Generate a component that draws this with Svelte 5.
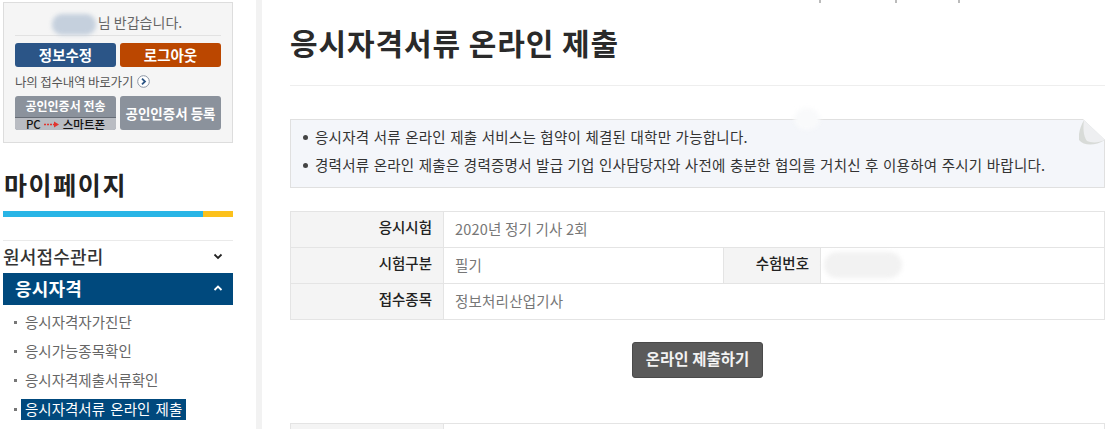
<script>
    const sections = ["응시자격자가진단", "응시가능종목확인", "응시자격제출서류확인", "응시자격서류 온라인 제출"]
    const notices = [
        "응시자격 서류 온라인 제출 서비스는 협약이 체결된 대학만 가능합니다.",
        "경력서류 온라인 제출은 경력증명서 발급 기업 인사담당자와 사전에 충분한 협의를 거치신 후 이용하여 주시기 바랍니다."
    ]
</script>

<div class="page">
    <aside>
        <div class="login">
            <p class="hello"><span class="blur-name"></span>님 반갑습니다.</p>
            <div class="btn-row">
                <button class="btn blue">정보수정</button>
                <button class="btn orange">로그아웃</button>
            </div>
            <p class="shortcut">
                나의 접수내역 바로가기
                <svg width="13" height="13" viewBox="0 0 13 13">
                    <circle cx="6.5" cy="6.5" r="5.8" fill="#fff" stroke="#8a94a3" />
                    <path d="M5 3.6 8 6.5 5 9.4" fill="none" stroke="#2c5585" stroke-width="1.8" />
                </svg>
            </p>
            <div class="btn-row">
                <button class="cert">
                    <span class="cert-top">공인인증서 전송</span>
                    <span class="cert-sub">
                        PC
                        <svg width="16" height="7" viewBox="0 0 16 7">
                            <path d="M0 3.5h10" stroke="#e2342f" stroke-width="1.4" stroke-dasharray="2 1" />
                            <path d="M10 .5 15 3.5 10 6.5z" fill="#e2342f" />
                        </svg>
                        스마트폰
                    </span>
                </button>
                <button class="cert single">공인인증서 등록</button>
            </div>
        </div>

        <h2>마이페이지</h2>
        <div class="title-bar"><span></span></div>

        <nav>
            <div class="menu">
                원서접수관리
                <svg width="10" height="7" viewBox="0 0 10 7"><path d="M1.5 1.5 5 5l3.5-3.5" fill="none" stroke="#222" stroke-width="1.8" /></svg>
            </div>
            <div class="menu active">
                응시자격
                <svg width="10" height="7" viewBox="0 0 10 7"><path d="M1.5 5 5 1.5 8.5 5" fill="none" stroke="#fff" stroke-width="1.8" /></svg>
            </div>
            <ul>
                {#each sections as item, i}
                    <li><span class:current={i == sections.length - 1}>{item}</span></li>
                {/each}
            </ul>
        </nav>
    </aside>

    <div class="divider"></div>

    <main>
        <div class="top-marks"><i></i><i></i><i></i></div>
        <h1>응시자격서류 온라인 제출</h1>

        <div class="notice">
            {#each notices as line}
                <p>{line}</p>
            {/each}
            <svg class="fold" width="26" height="27" viewBox="0 0 26 27">
                <path d="M4 0H26V21Z" fill="#fff" />
                <path d="M5 1C1 8-1 16 0 21 5 27 16 27 26 21Z" fill="#d8dbd8" />
                <path d="M5 1 26 21C20 24 12 24 8 22 4 17 4 8 5 1Z" fill="#eeeff1" />
            </svg>
            <span class="smudge"></span>
        </div>

        <table>
            <colgroup>
                <col class="c1" /><col class="c2" /><col class="c3" /><col />
            </colgroup>
            <tbody>
                <tr>
                    <th>응시시험</th>
                    <td colspan="3">2020년 정기 기사 2회</td>
                </tr>
                <tr>
                    <th>시험구분</th>
                    <td>필기</td>
                    <th>수험번호</th>
                    <td><span class="blur-num"></span></td>
                </tr>
                <tr>
                    <th>접수종목</th>
                    <td colspan="3">정보처리산업기사</td>
                </tr>
            </tbody>
        </table>

        <div class="submit-row">
            <button class="submit">온라인 제출하기</button>
        </div>

        <div class="next-table"><span></span></div>
    </main>
</div>

<style>
    :global(body) {
        background: #fff;
        overflow: hidden;
    }

    .page {
        display: flex;
        width: 1111px;
        height: 429px;
        overflow: hidden;
        font-family: "Noto Sans CJK KR", "Noto Sans", sans-serif;
        color: #222;
    }

    button {
        font-family: inherit;
        border: none;
        padding: 0;
    }

    p, h1, h2, ul {
        margin: 0;
        padding: 0;
    }

    aside {
        width: 230px;
        margin: 2px 0 0 3px;
        flex-shrink: 0;
    }

    .login {
        box-sizing: border-box;
        height: 141px;
        padding: 0 11px;
        background: #f5f5f5;
        border: 1px solid #ddd;
    }

    .hello {
        position: relative;
        box-sizing: border-box;
        height: 33px;
        line-height: 38px;
        font-size: 14px;
        color: #666;
        text-align: center;
        padding-left: 44px;
        border-bottom: 1px solid #e2e2e2;
        margin-bottom: 7px;
    }

    .blur-name {
        position: absolute;
        left: 37px;
        top: 11px;
        width: 44px;
        height: 21px;
        border-radius: 10px;
        background: #c5d0dd;
        filter: blur(2px);
    }

    .btn-row {
        display: flex;
        justify-content: space-between;
    }

    .btn {
        width: 101px;
        height: 24px;
        border-radius: 3px;
        color: #fff;
        font-size: 14.5px;
        font-weight: 700;
        line-height: 22px;
    }

    .blue {
        background: #2b5587;
    }

    .orange {
        background: #bb4700;
    }

    .shortcut {
        display: flex;
        align-items: center;
        gap: 4px;
        height: 29px;
        font-size: 12.5px;
        letter-spacing: -0.2px;
        color: #555;
    }

    .cert {
        display: flex;
        flex-direction: column;
        width: 101px;
        height: 34px;
        border-radius: 3px;
        background: #8b929c;
        color: #fff;
        font-size: 12px;
        font-weight: 700;
    }

    .cert-top {
        width: 100%;
        height: 21px;
        line-height: 20px;
    }

    .cert-sub {
        display: flex;
        align-items: center;
        justify-content: center;
        gap: 3px;
        box-sizing: border-box;
        width: 100%;
        height: 13px;
        border-top: 1px solid #666c75;
        border-radius: 0 0 3px 3px;
        background: #b9bcc2;
        color: #111;
        font-size: 11.5px;
        font-weight: 500;
        line-height: 12px;
    }

    .single {
        justify-content: center;
        font-size: 13.5px;
    }

    h2 {
        margin-top: 25px;
        height: 43px;
        padding-left: 1px;
        line-height: 33px;
        font-size: 25px;
        font-weight: 700;
        letter-spacing: 1.6px;
        color: #222;
    }

    .title-bar {
        height: 6px;
        background: #29b5e6;
        display: flex;
        justify-content: flex-end;
    }

    .title-bar span {
        width: 30px;
        background: #fcc11c;
    }

    nav {
        margin-top: 23px;
        border-top: 1px solid #eaeaea;
    }

    .menu {
        display: flex;
        align-items: center;
        justify-content: space-between;
        box-sizing: border-box;
        height: 32px;
        padding: 0 10px 2px 0;
        font-size: 18px;
        letter-spacing: 0.2px;
        font-weight: 500;
        color: #333;
    }

    .active {
        padding-left: 12px;
        background: #00497d;
        color: #fff;
        font-weight: 700;
    }

    ul {
        list-style: none;
        padding-top: 2px;
    }

    li {
        position: relative;
        height: 29px;
        line-height: 29px;
        padding-left: 22px;
        font-size: 14.5px;
        color: #666;
    }

    li::before {
        content: "";
        position: absolute;
        left: 11px;
        top: 14px;
        width: 3px;
        height: 3px;
        background: #777;
    }

    .current {
        display: inline-block;
        height: 21px;
        line-height: 20px;
        margin-left: -4px;
        padding: 0 4px;
        word-spacing: 2px;
        background: #00497d;
        color: #fff;
    }

    .divider {
        width: 6px;
        height: 100%;
        margin-left: 23px;
        background: #f2f2f2;
        flex-shrink: 0;
    }

    main {
        position: relative;
        width: 815px;
        margin-left: 28px;
        flex-shrink: 0;
    }

    .top-marks i {
        position: absolute;
        top: 0;
        width: 2px;
        height: 3px;
        background: #bbb;
    }

    .top-marks i:nth-child(1) {
        left: 529px;
    }

    .top-marks i:nth-child(2) {
        left: 605px;
    }

    .top-marks i:nth-child(3) {
        left: 668px;
    }

    h1 {
        height: 85px;
        line-height: 84px;
        font-size: 30px;
        font-weight: 700;
        letter-spacing: 0.9px;
        color: #2a2a2a;
        border-bottom: 1px solid #eee;
    }

    .notice {
        position: relative;
        box-sizing: border-box;
        height: 69px;
        margin-top: 33px;
        padding: 3px 0 0 24px;
        background: #f4f6fa;
        border: 1px solid #e0e0e0;
    }

    .notice p {
        position: relative;
        height: 28px;
        line-height: 27px;
        font-size: 14.5px;
        letter-spacing: 0.25px;
        word-spacing: 0.8px;
        color: #333;
    }

    .notice p::before {
        content: "";
        position: absolute;
        left: -12px;
        top: 12px;
        width: 5px;
        height: 5px;
        border-radius: 50%;
        background: #444;
    }

    .fold {
        position: absolute;
        right: -1px;
        top: -1px;
    }

    .smudge {
        position: absolute;
        left: 503px;
        top: -12px;
        width: 26px;
        height: 22px;
        border-radius: 50%;
        background: #f9fafb;
        filter: blur(2px);
    }

    table {
        width: 815px;
        margin-top: 23px;
        border-collapse: collapse;
        table-layout: fixed;
        font-size: 14.5px;
    }

    .c1 {
        width: 153px;
    }

    .c2 {
        width: 280px;
    }

    .c3 {
        width: 97px;
    }

    th, td {
        box-sizing: border-box;
        height: 36px;
        padding: 0;
        border: 1px solid #e4e4e4;
        vertical-align: top;
    }

    th {
        padding-right: 11px;
        text-align: right;
        background: #f4f4f4;
        font-weight: 500;
        color: #222;
        line-height: 29px;
    }

    td {
        padding-left: 11px;
        letter-spacing: 0.2px;
        color: #777;
        line-height: 33px;
    }

    .blur-num {
        display: block;
        width: 78px;
        height: 26px;
        margin: 4px 0 0 -8px;
        border-radius: 13px;
        background: #f2f2f2;
        filter: blur(2px);
    }

    .submit-row {
        display: flex;
        justify-content: center;
        margin-top: 22px;
    }

    .submit {
        box-sizing: border-box;
        width: 131px;
        height: 36px;
        padding-bottom: 5px;
        border: 1px solid #4a4a4a;
        border-radius: 3px;
        background: #5a5a5a;
        color: #f2f2f2;
        font-size: 15.5px;
        font-weight: 700;
    }

    .next-table {
        margin-top: 45px;
        height: 30px;
        background: #fff;
        border: 1px solid #e4e4e4;
        border-bottom: none;
    }

    .next-table span {
        display: block;
        width: 152px;
        height: 100%;
        background: #f4f4f4;
        border-right: 1px solid #e4e4e4;
    }
</style>
